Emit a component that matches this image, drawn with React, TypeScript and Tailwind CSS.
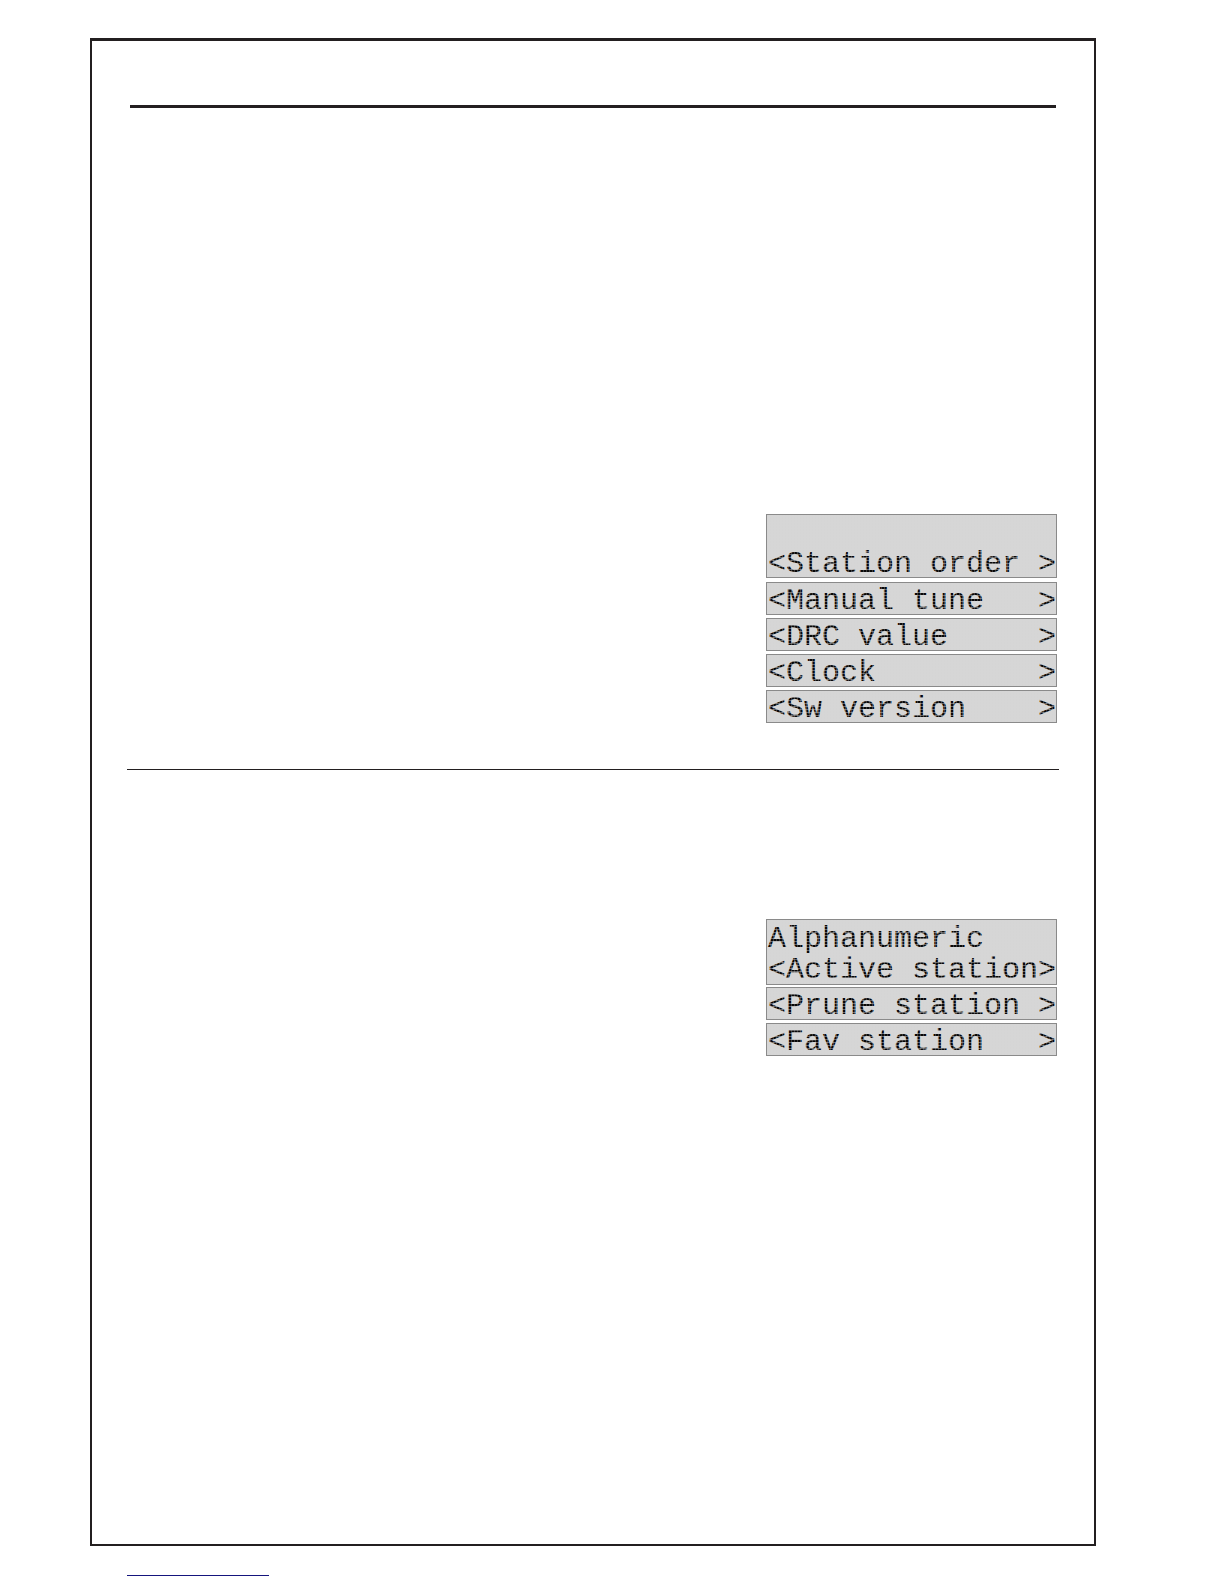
/* ── Menu screens, 16 characters per line ───────────────────────── */
const MAIN_MENU = [
  "<Manual tune   >",
  "<DRC value     >",
  "<Clock         >",
  "<Sw version    >",
];

const STATION_MENU = ["<Prune station >", "<Fav station   >"];

function Line({ text }: { text: string }) {
  return <p className="h-[31px] pt-1 leading-7 whitespace-pre">{text}</p>;
}

function Display({ lines, className = "" }: { lines: string[]; className?: string }) {
  return (
    <div
      className={`relative w-[291px] border border-[#8a8a8a] bg-[#d6d6d6] pl-px font-['Liberation_Mono',monospace] text-[30px] text-[#080808] ${className}`}
    >
      {lines.map((line, i) => (
        <Line key={i} text={line} />
      ))}
      {/* Gaps between the LCD dots */}
      <div
        aria-hidden="true"
        className="pointer-events-none absolute inset-0 bg-[linear-gradient(to_right,#d6d6d640_1px,transparent_1px),linear-gradient(to_bottom,#d6d6d670_1px,transparent_1px)] bg-size-[3px_3px]"
      />
    </div>
  );
}

export default function App() {
  return (
    <div className="bg-white pt-[38px] pb-2">
      <main className="mr-[128px] ml-[90px] border-2 border-t-[3px] border-[#231f20] px-[35px] pb-[488px]">
        <hr className="mx-[3px] mt-16 border-0 border-t-[3px] border-[#231f20]" />

        {/* Main menu */}
        <section className="flex flex-col items-end gap-[3px] pt-[406px] pr-[2px] pb-[46px]">
          <Display lines={[" ", "<Station order >"]} className="mb-px" />
          {MAIN_MENU.map((item) => (
            <Display key={item} lines={[item]} />
          ))}
        </section>

        <hr className="border-0 border-t border-[#231f20]" />

        {/* Station order */}
        <section className="flex flex-col items-end gap-[3px] pt-[149px] pr-[2px]">
          <Display lines={["Alphanumeric", "<Active station>"]} className="-mb-px py-px" />
          {STATION_MENU.map((item) => (
            <Display key={item} lines={[item]} />
          ))}
        </section>
      </main>

      <hr className="mt-[29px] ml-[127px] w-[142px] border-0 border-t border-[#15157d]" />
    </div>
  );
}
